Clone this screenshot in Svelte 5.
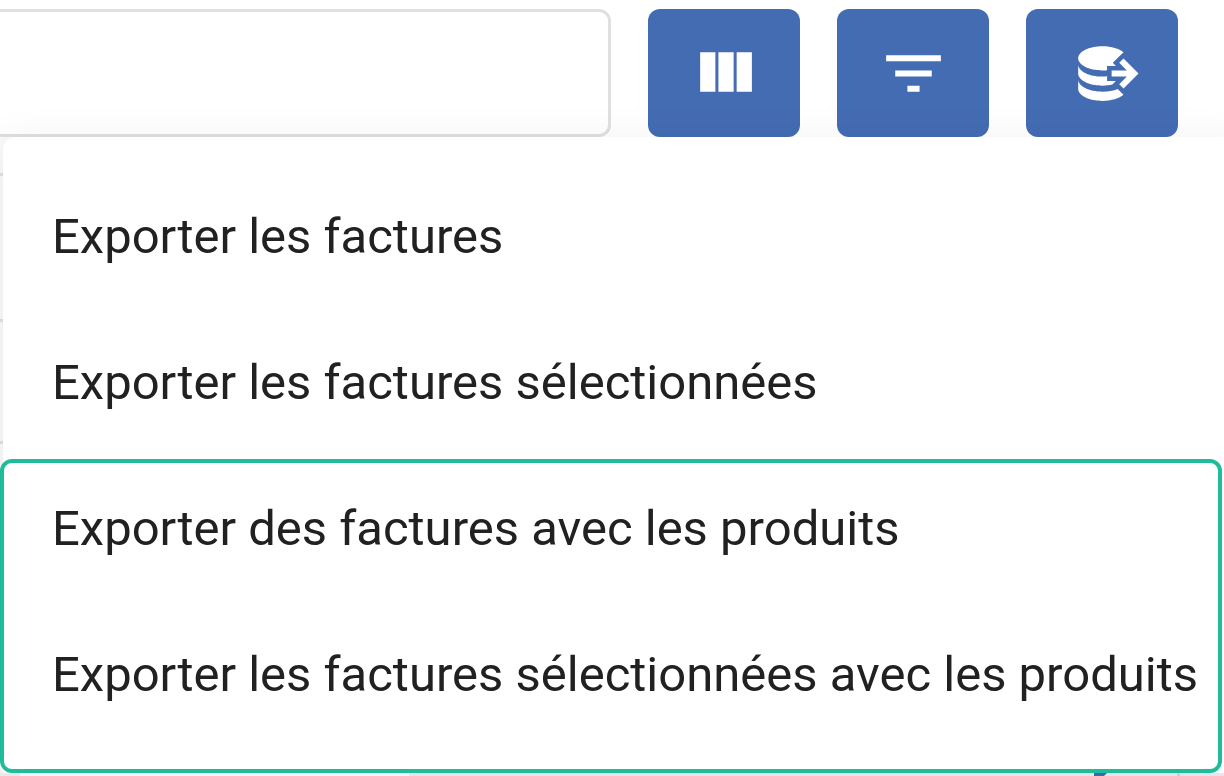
<script lang="ts">
	const tools = [
		{
			label: 'Colonnes',
			path: 'M10 18h5V5h-5v13zm-6 0h5V5H4v13zM16 5v13h5V5h-5z'
		},
		{
			label: 'Filtrer',
			path: 'M10 18h4v-2h-4v2zM3 6v2h18V6H3zm3 7h12v-2H6v2z'
		},
		{
			label: 'Exporter',
			path: 'M12 3C7.58 3 4 4.79 4 7s3.58 4 8 4c.5 0 1-.03 1.5-.08V9.5h2.89l-1-1L18.9 5C17.5 3.8 14.94 3 12 3m6.92 4.08L17.5 8.5 20 11h-5v2h5l-2.5 2.5 1.42 1.42L23.84 12M4 9v3c0 2.21 3.58 4 8 4 1.17 0 2.26-.15 3.25-.37l1.13-1.13H13.5v-1.58c-.5.05-1 .08-1.5.08-4.42 0-8-1.79-8-4m0 5v3c0 2.21 3.58 4 8 4 2.94 0 5.5-.8 6.9-2L17 17.1c-1.39.56-3.1.9-5 .9-4.42 0-8-1.79-8-4z'
		}
	];

	const plain = ['Exporter les factures', 'Exporter les factures sélectionnées'];
	const withProducts = [
		'Exporter des factures avec les produits',
		'Exporter les factures sélectionnées avec les produits'
	];

	let search = $state('');
	let open = $state(true);

	function toggle(label: string) {
		if (label === 'Exporter') open = !open;
	}
</script>

<div class="page">
	<div class="toolbar">
		<input class="search" type="text" aria-label="Rechercher" bind:value={search} />
		{#each tools as tool}
			<button class="tool" aria-label={tool.label} onclick={() => toggle(tool.label)}>
				<svg viewBox="0 0 24 24" aria-hidden="true"><path d={tool.path} /></svg>
			</button>
		{/each}
	</div>

	<div class="content">
		<!-- invoice list behind the menu -->
		<div class="rows">
			<div class="row head"></div>
			<div class="row tall"></div>
			<div class="row"></div>
			<div class="rest"></div>
			<div class="footer">
				<div class="footer-card"></div>
				<svg class="marker" viewBox="0 0 16 4" aria-hidden="true"><path d="M1 0h14l-4 4H1z" /></svg>
				<div class="divider"></div>
			</div>
		</div>

		{#if open}
			<div class="menu" role="menu">
				{#each plain as item}
					<button class="item" role="menuitem">{item}</button>
				{/each}
				<div class="group">
					{#each withProducts as item}
						<button class="item" role="menuitem">{item}</button>
					{/each}
					<div class="frame"></div>
				</div>
			</div>
		{/if}
	</div>
</div>

<style>
	:global(body) {
		background: #fff;
		font-family: Roboto, 'Liberation Sans', sans-serif;
	}

	.page {
		min-height: 100vh;
		overflow: hidden;
		display: flex;
		flex-direction: column;
	}

	.toolbar {
		display: flex;
		gap: 37px;
		padding: 9px 46px 0 0;
	}

	.search {
		flex: 1;
		min-width: 0;
		height: 128px;
		box-sizing: border-box;
		padding: 0 40px;
		border: 3px solid #e0e0e0;
		border-left: none;
		border-radius: 0 12px 12px 0;
		background: #fff;
		font: inherit;
		font-size: 48px;
		outline: none;
	}

	.tool {
		display: flex;
		align-items: center;
		justify-content: center;
		width: 152px;
		height: 128px;
		padding: 0;
		border: none;
		border-radius: 12px;
		background: #446cb3;
		cursor: pointer;
	}

	.tool svg {
		width: 73px;
		height: 73px;
		fill: #fff;
	}

	.content {
		flex: 1;
		display: grid;
		grid-template-columns: minmax(0, 1fr);
	}

	.rows,
	.menu {
		grid-area: 1 / 1;
	}

	.rows {
		display: flex;
		flex-direction: column;
		background: #fafafa;
	}

	.row {
		height: 119px;
		border-bottom: 3px solid #e0e0e0;
	}

	.row.head {
		height: 36px;
	}

	.row.tall {
		height: 143px;
	}

	.rest {
		flex: 1;
	}

	.footer {
		display: flex;
		height: 4px;
		padding: 0 44px 0 20px;
		background: #f0f0f0;
	}

	.footer-card {
		width: 389px;
		margin-right: auto;
		background: #fff;
	}

	.marker {
		width: 16px;
		height: 4px;
		margin-right: 68px;
		fill: #446cb3;
	}

	.divider {
		width: 3px;
		background: #d8d8d8;
	}

	.menu {
		position: relative;
		margin: 0 -14px 3px 3px;
		padding: 26px 0 0;
		border-radius: 12px 0 0 0;
		background: #fff;
		box-shadow: 0 9px 42px 6px rgba(0, 0, 0, 0.06);
	}

	.item {
		display: block;
		width: 100%;
		height: 146px;
		padding: 0 32px 0 49px;
		border: none;
		background: none;
		color: #212121;
		font: inherit;
		font-size: 49px;
		line-height: 73px;
		text-align: left;
		white-space: nowrap;
		cursor: pointer;
	}

	.group {
		position: relative;
		padding-bottom: 26px;
	}

	/* highlight around the product exports */
	.frame {
		position: absolute;
		inset: 4px 16px 0 -3px;
		border: 4px solid #1fbc9c;
		border-radius: 12px;
		pointer-events: none;
	}
</style>
